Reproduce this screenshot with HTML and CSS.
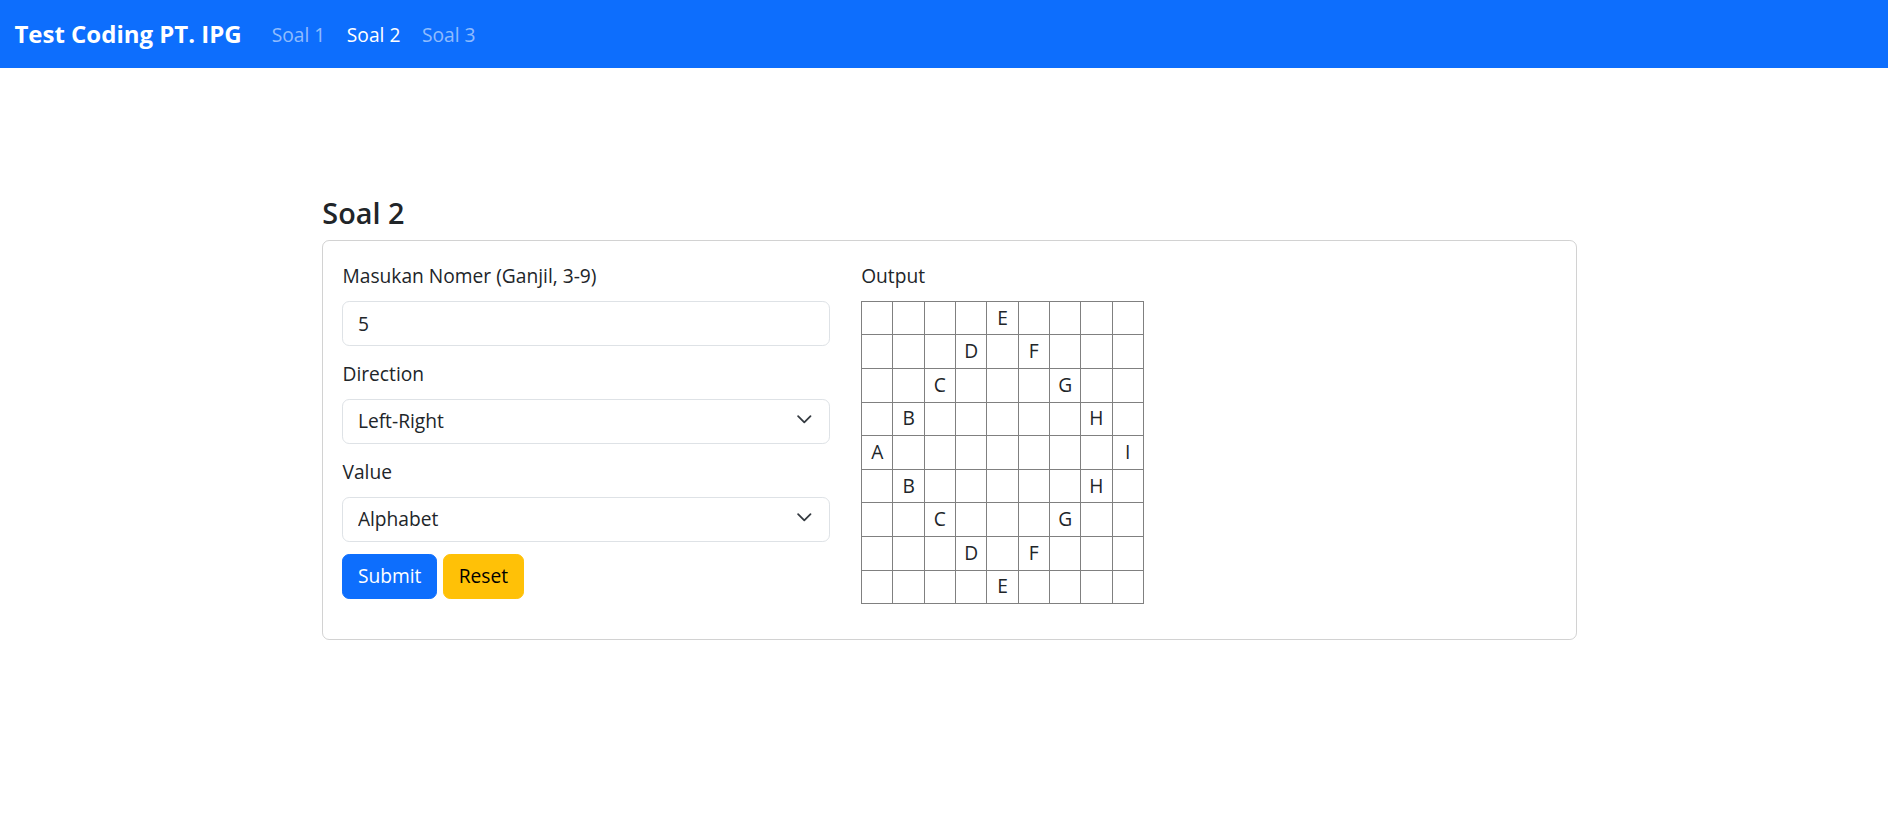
FILE: index.html
```html
<!DOCTYPE html>
<html lang="id">
<head>
<meta charset="utf-8">
<title>Test Coding PT. IPG</title>
<link rel="stylesheet" href="styles.css">
</head>
<body>
<nav class="navbar">
  <a class="brand" href="#">Test Coding PT. IPG</a>
  <ul class="nav">
    <li><a class="nav-link" href="#">Soal 1</a></li>
    <li><a class="nav-link active" href="#">Soal 2</a></li>
    <li><a class="nav-link" href="#">Soal 3</a></li>
  </ul>
</nav>
<main class="main">
  <div class="container">
    <h4 class="title">Soal 2</h4>
    <div class="card">
      <div class="row">
        <div class="col-form">
          <div class="group">
            <label class="label" for="nomer">Masukan Nomer (Ganjil, 3-9)</label>
            <input class="control" id="nomer" type="text" value="5">
          </div>
          <div class="group">
            <label class="label" for="dir">Direction</label>
            <div class="select-wrap">
              <select class="control select" id="dir"><option>Left-Right</option><option>Right-Left</option></select>
              <svg class="chevron" viewBox="0 0 16 16"><path d="M2 5l6 6 6-6" fill="none" stroke="#343a40" stroke-width="1.7" stroke-linecap="round" stroke-linejoin="round"/></svg>
            </div>
          </div>
          <div class="group">
            <label class="label" for="val">Value</label>
            <div class="select-wrap">
              <select class="control select" id="val"><option>Alphabet</option><option>Number</option></select>
              <svg class="chevron" viewBox="0 0 16 16"><path d="M2 5l6 6 6-6" fill="none" stroke="#343a40" stroke-width="1.7" stroke-linecap="round" stroke-linejoin="round"/></svg>
            </div>
          </div>
          <div class="buttons">
            <button class="btn btn-primary" type="button">Submit</button>
            <button class="btn btn-warning" type="button">Reset</button>
          </div>
        </div>
        <div class="col-output">
          <div class="label">Output</div>
          <table class="grid">
            <tr><td></td><td></td><td></td><td></td><td>E</td><td></td><td></td><td></td><td></td></tr>
            <tr><td></td><td></td><td></td><td>D</td><td></td><td>F</td><td></td><td></td><td></td></tr>
            <tr><td></td><td></td><td>C</td><td></td><td></td><td></td><td>G</td><td></td><td></td></tr>
            <tr><td></td><td>B</td><td></td><td></td><td></td><td></td><td></td><td>H</td><td></td></tr>
            <tr><td>A</td><td></td><td></td><td></td><td></td><td></td><td></td><td></td><td>I</td></tr>
            <tr><td></td><td>B</td><td></td><td></td><td></td><td></td><td></td><td>H</td><td></td></tr>
            <tr><td></td><td></td><td>C</td><td></td><td></td><td></td><td>G</td><td></td><td></td></tr>
            <tr><td></td><td></td><td></td><td>D</td><td></td><td>F</td><td></td><td></td><td></td></tr>
            <tr><td></td><td></td><td></td><td></td><td>E</td><td></td><td></td><td></td><td></td></tr>
          </table>
        </div>
      </div>
    </div>
  </div>
</main>
</body>
</html>
```
FILE: styles.css
```css
* { box-sizing: border-box; }

body {
  margin: 0;
  font-family: "Open Sans", "Noto Sans", sans-serif;
  font-size: 19.2px;
  line-height: 1.5;
  color: #212529;
  background: #fff;
}

.navbar {
  display: flex;
  align-items: center;
  height: 68px;
  padding: 0 14.4px;
  background: #0d6efd;
}

.brand {
  font-size: 24px;
  font-weight: 700;
  line-height: 36px;
  color: #fff;
  text-decoration: none;
  margin-right: 19.2px;
}

.nav {
  display: flex;
  list-style: none;
  margin: 0;
  padding: 0;
}

.nav-link {
  display: block;
  padding: 10px 10.8px 8px;
  color: rgba(255, 255, 255, 0.55);
  text-decoration: none;
}

.nav-link.active { color: #fff; }

.main {
  padding: 127.5px 0 0 11px;
}

.container {
  width: 1254.4px;
  margin: 0 auto;
}

.title {
  margin: 0 0 9.6px;
  font-size: 28.8px;
  font-weight: 600;
  line-height: 1.2;
}

.card {
  border: 1.2px solid rgba(0, 0, 0, 0.175);
  border-radius: 7.2px;
  padding: 19.2px;
}

.row {
  display: grid;
  grid-template-columns: 487.7px 1fr;
  column-gap: 31px;
  align-items: start;
}

.group { margin-bottom: 11.4px; }

.label {
  display: block;
  padding-top: 2.4px;
  margin-bottom: 9.8px;
}

.control {
  display: block;
  width: 100%;
  height: 45.6px;
  padding: 7.2px 14.4px;
  font: inherit;
  line-height: 28.8px;
  color: #212529;
  background: #fff;
  border: 1.2px solid #dee2e6;
  border-radius: 7.2px;
  outline: none;
}

.select-wrap { position: relative; }

.select {
  appearance: none;
  -webkit-appearance: none;
  padding-right: 48px;
}

.chevron {
  position: absolute;
  right: 17.7px;
  top: 50%;
  width: 16.6px;
  height: 16.6px;
  margin-top: -10.1px;
  pointer-events: none;
}

.buttons {
  display: flex;
  gap: 6.6px;
  margin-bottom: 21.4px;
}

.btn {
  font: inherit;
  line-height: 28.8px;
  padding: 7.2px 14.4px;
  border: 1.2px solid transparent;
  border-radius: 7.2px;
  cursor: pointer;
}

.btn-primary { background: #0d6efd; border-color: #0d6efd; color: #fff; }
.btn-warning { background: #ffc107; border-color: #ffc107; color: #000; }

.grid {
  border-collapse: collapse;
}

.grid td {
  width: 31.3px;
  height: 33.6px;
  padding: 0;
  border: 1px solid #808080;
  text-align: center;
  vertical-align: middle;
  line-height: 28.8px;
}
```
